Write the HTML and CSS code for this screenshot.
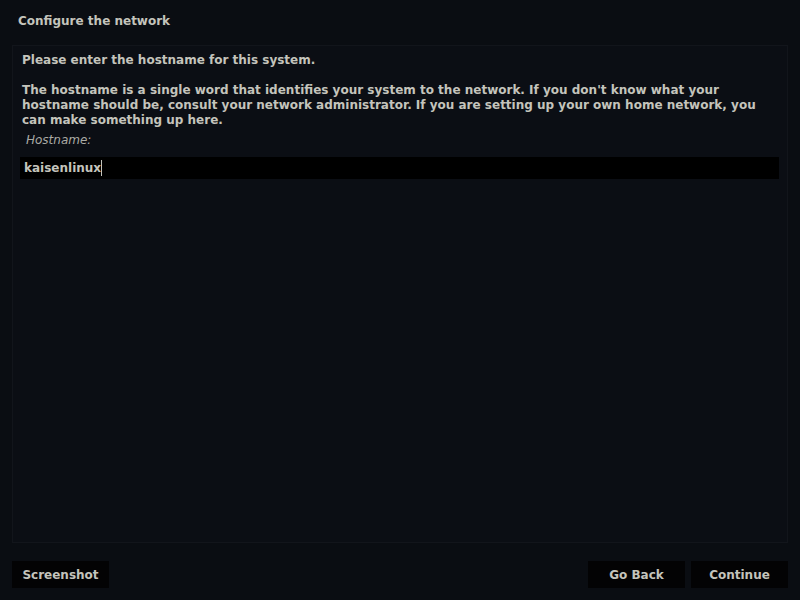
FILE: index.html
```html
<!DOCTYPE html>
<html lang="en">
<head>
    <meta charset="UTF-8">
    <title>Configure the network</title>
    <link rel="stylesheet" href="styles.css">
</head>
<body>
    <div class="installer">
        <div class="title">Configure the network</div>

        <div class="panel">
            <p class="lead">Please enter the hostname for this system.</p>
            <p class="info">The hostname is a single word that identifies your system to the network. If you don't know what your hostname should be, consult your network administrator. If you are setting up your own home network, you can make something up here.</p>
            <div class="field-label">Hostname:</div>
            <div class="field"><span class="value">kaisenlinux</span><span class="caret"></span></div>
        </div>

        <div class="buttons">
            <button class="btn">Screenshot</button>
            <div class="spacer"></div>
            <button class="btn">Go Back</button>
            <button class="btn">Continue</button>
        </div>
    </div>
</body>
</html>
```

FILE: styles.css
```css
body {
    margin: 0;
    padding: 0;
    background-color: #0a0d12;
    font-family: "DejaVu Sans", sans-serif;
    font-weight: bold;
    font-size: 12px;
    color: #c4c4bc;
}

.installer {
    width: 800px;
    height: 600px;
    display: flex;
    flex-direction: column;
}

.title {
    padding: 14px 18px 0 18px;
    height: 16px;
    line-height: 15px;
}

.panel {
    margin: 15px 12px 0 12px;
    height: 489px;
    border: 1px solid #12151b;
    background-color: #0b0e14;
    padding: 7px 7px 0 7px;
}

.panel p {
    margin: 0;
    padding-left: 2px;
    line-height: 15px;
}

.lead {
    margin-bottom: 15px !important;
}

.field-label {
    font-weight: normal;
    font-style: italic;
    color: #aaaaa4;
    padding-left: 6px;
    margin-top: 5px;
    margin-bottom: 9px;
    line-height: 15px;
    height: 15px;
}

.field {
    background-color: #000;
    height: 22px;
    width: 759px;
    display: flex;
    align-items: center;
    padding-left: 4px;
    box-sizing: border-box;
}

.caret {
    display: inline-block;
    width: 1px;
    height: 16px;
    background-color: #c4c4bc;
}

.buttons {
    display: flex;
    gap: 6px;
    padding: 18px 12px 0 12px;
}

.spacer {
    flex: 1;
}

.btn {
    width: 97px;
    height: 27px;
    background-color: #030304;
    color: #c4c4bc;
    border: none;
    font-family: "DejaVu Sans", sans-serif;
    font-weight: bold;
    font-size: 12px;
    padding: 0;
}
```
